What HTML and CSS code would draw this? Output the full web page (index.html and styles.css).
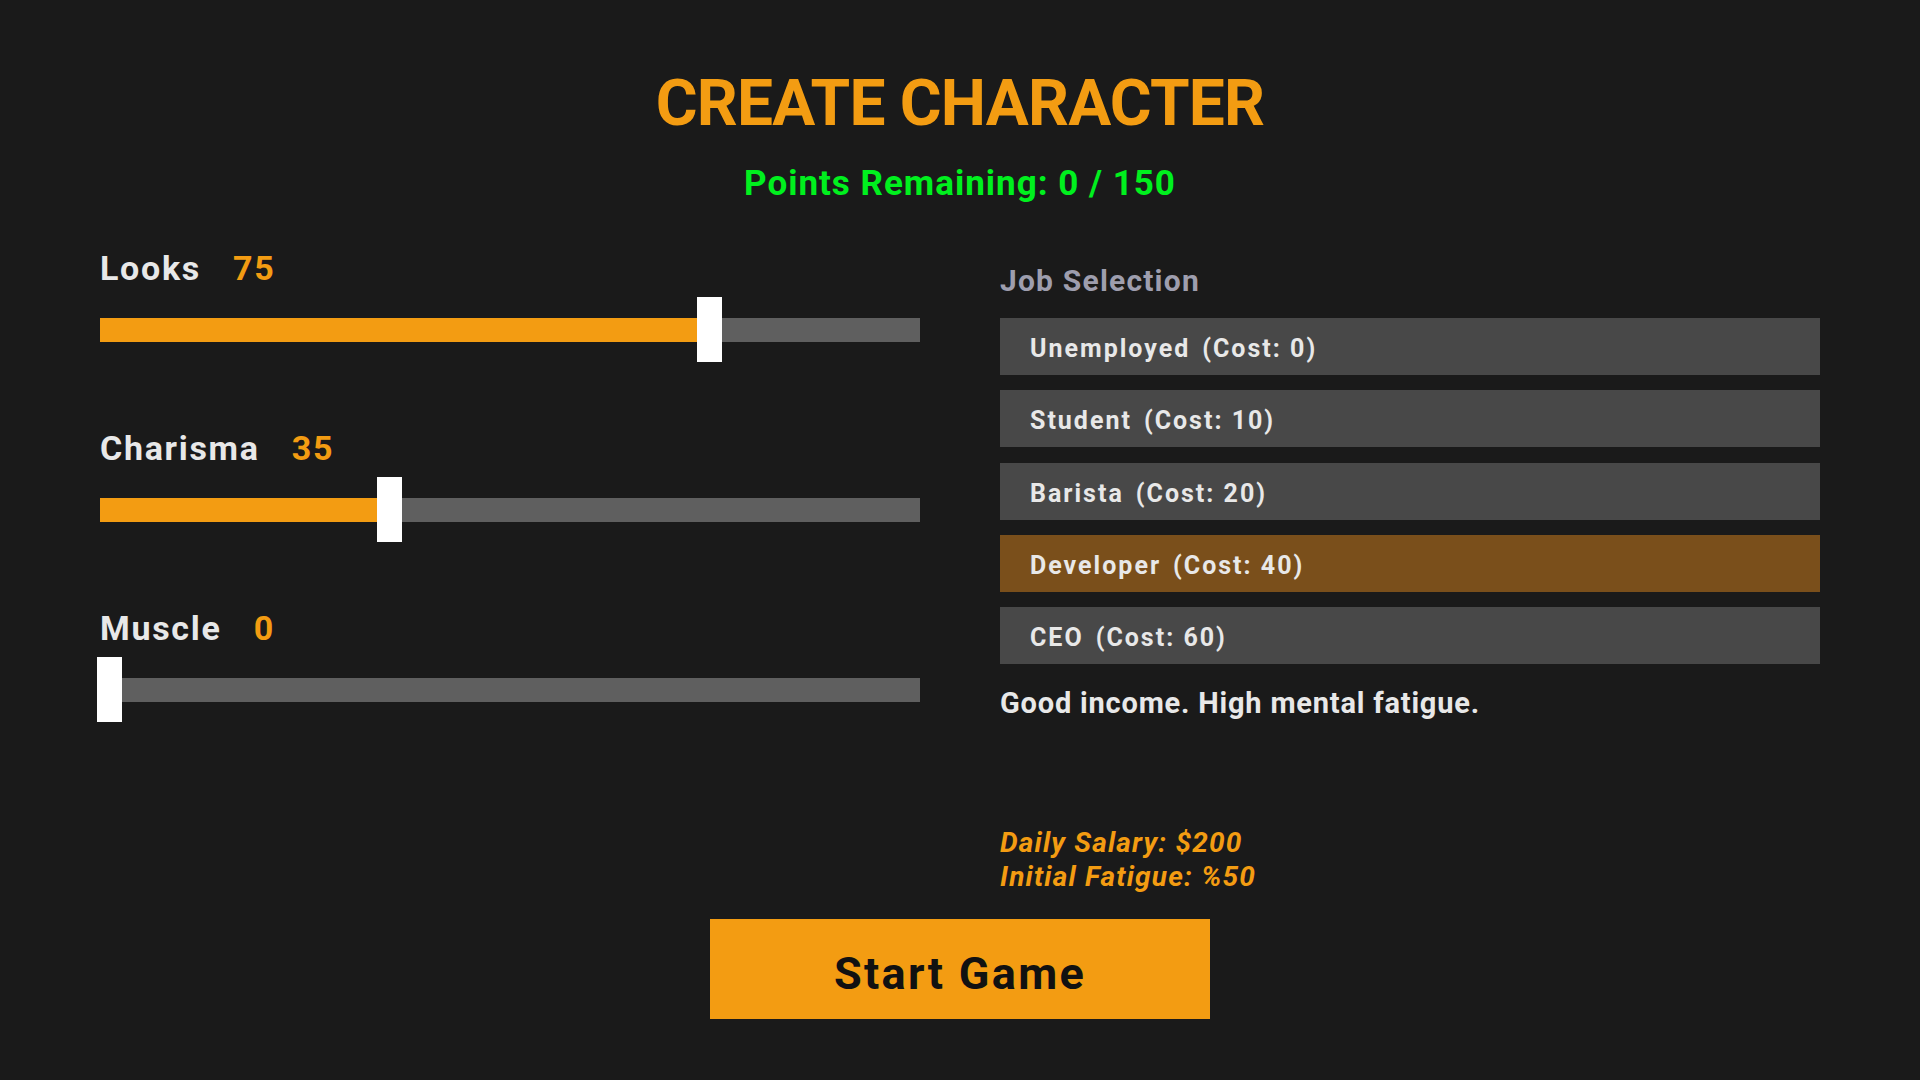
FILE: index.html
```html
<!DOCTYPE html>
<html lang="en">
<head>
    <meta charset="UTF-8">
    <meta name="viewport" content="width=device-width, initial-scale=1.0">
    <title>Create Character</title>
    <link rel="stylesheet" href="styles.css">
</head>
<body>

    <div class="screen">
        <h1 class="title">CREATE CHARACTER</h1>
        <div class="points">Points Remaining: 0 / 150</div>

        <div class="columns">
            <!-- Stats -->
            <div class="stats">
                <div class="stat">
                    <div class="stat-label">Looks <span class="stat-value">75</span></div>
                    <div class="slider" style="--v: 75">
                        <div class="slider-fill"></div>
                        <div class="slider-thumb"></div>
                    </div>
                </div>
                <div class="stat">
                    <div class="stat-label">Charisma <span class="stat-value">35</span></div>
                    <div class="slider" style="--v: 35">
                        <div class="slider-fill"></div>
                        <div class="slider-thumb"></div>
                    </div>
                </div>
                <div class="stat">
                    <div class="stat-label">Muscle <span class="stat-value">0</span></div>
                    <div class="slider" style="--v: 0">
                        <div class="slider-fill"></div>
                        <div class="slider-thumb"></div>
                    </div>
                </div>
            </div>

            <!-- Jobs -->
            <div class="jobs">
                <h2 class="jobs-title">Job Selection</h2>
                <div class="job-list">
                    <button class="job-btn"><span>Unemployed</span><span>(Cost: 0)</span></button>
                    <button class="job-btn"><span>Student</span><span>(Cost: 10)</span></button>
                    <button class="job-btn"><span>Barista</span><span>(Cost: 20)</span></button>
                    <button class="job-btn selected"><span>Developer</span><span>(Cost: 40)</span></button>
                    <button class="job-btn"><span>CEO</span><span>(Cost: 60)</span></button>
                </div>
                <p class="job-desc">Good income. High mental fatigue.</p>
                <div class="job-info">
                    Daily Salary: $200<br>
                    Initial Fatigue: %50
                </div>
            </div>
        </div>

        <button class="start-btn">Start Game</button>
    </div>

</body>
</html>
```

FILE: styles.css
```css
body {
    margin: 0;
    background-color: #1a1a1a;
    font-family: 'Roboto', 'Liberation Sans', sans-serif;
    color: #e8e8e8;
    height: 100vh;
    overflow: hidden;
}

.screen {
    display: flex;
    flex-direction: column;
    align-items: center;
    padding-top: 72px;
}

.title {
    margin: 0;
    font-size: 64px;
    line-height: 64px;
    font-weight: 700;
    letter-spacing: -0.8px;
    color: #f39c12;
}

.points {
    margin-top: 30px;
    font-size: 35px;
    line-height: 35px;
    font-weight: 700;
    letter-spacing: 1px;
    color: #00f01e;
}

.columns {
    display: grid;
    grid-template-columns: 820px 820px;
    gap: 80px;
    margin-top: 50px;
}

/* Stat sliders */
.stat {
    margin-bottom: 69px;
}

.stat-label {
    font-size: 34px;
    line-height: 34px;
    font-weight: 700;
    letter-spacing: 1.7px;
    margin-bottom: 12px;
}

.stat-value {
    color: #f39c12;
    margin-left: 22px;
}

.slider {
    position: relative;
    height: 65px;
}

.slider::before {
    content: "";
    position: absolute;
    left: 0;
    right: 0;
    top: 21px;
    height: 24px;
    background: #5f5f5f;
}

.slider-fill {
    position: absolute;
    left: 0;
    top: 21px;
    height: 24px;
    width: calc(var(--v) * 8px + 9px);
    background: #f39c12;
}

.slider-thumb {
    position: absolute;
    top: 0;
    left: calc(var(--v) * 8px - 3px);
    width: 25px;
    height: 65px;
    background: #fff;
}

/* Job selection */
.jobs-title {
    margin: 15px 0 22px;
    font-size: 30px;
    line-height: 30px;
    font-weight: 700;
    letter-spacing: 1.2px;
    color: #9e9eae;
}

.job-list {
    display: flex;
    flex-direction: column;
    gap: 15.25px;
}

.job-btn {
    display: flex;
    gap: 12px;
    height: 57px;
    padding: 4px 30px 0;
    border: none;
    background: #484848;
    color: #e8e8e8;
    font-family: inherit;
    font-size: 25px;
    line-height: 53px;
    font-weight: 700;
    letter-spacing: 2px;
    text-align: left;
    cursor: pointer;
}

.job-btn.selected {
    background: #7a4f1b;
}

.job-desc {
    margin: 25px 0 0;
    font-size: 29px;
    line-height: 29px;
    font-weight: 700;
    letter-spacing: 0.8px;
}

.job-info {
    margin-top: 108px;
    font-size: 28px;
    line-height: 34px;
    font-weight: 700;
    font-style: italic;
    letter-spacing: 1.2px;
    color: #f39c12;
}

.start-btn {
    margin-top: 25px;
    width: 500px;
    height: 100px;
    padding-top: 9px;
    border: none;
    background: #f39c12;
    color: #111;
    font-family: inherit;
    font-size: 45px;
    font-weight: 700;
    letter-spacing: 2.3px;
    cursor: pointer;
}
```
